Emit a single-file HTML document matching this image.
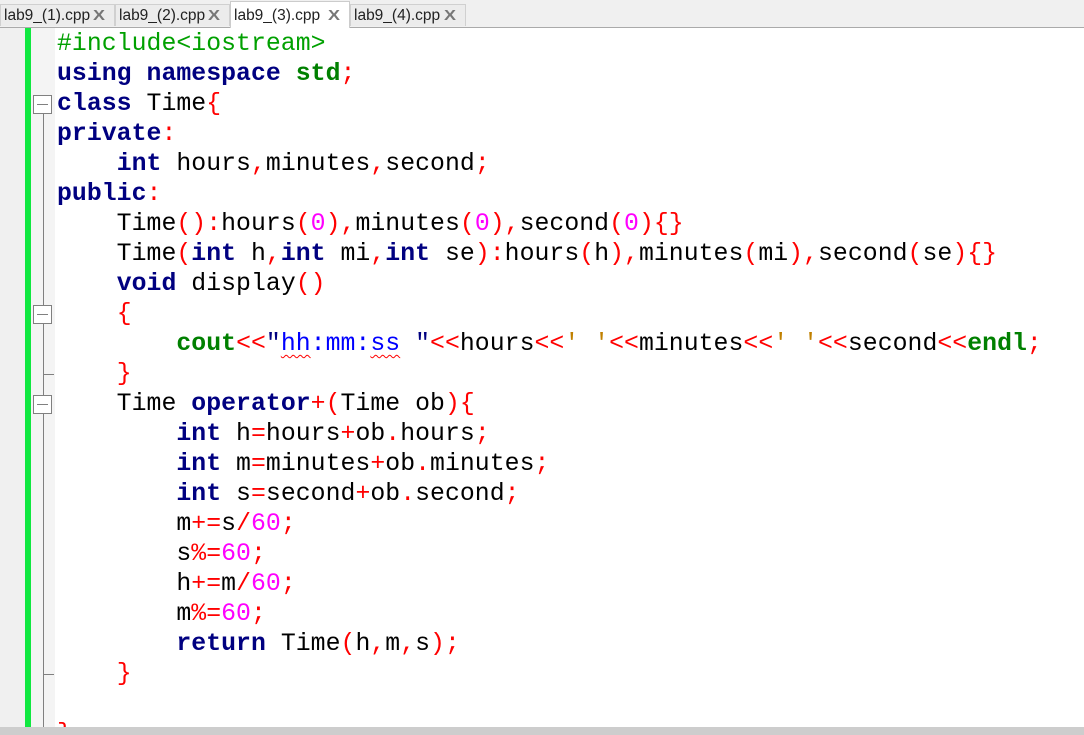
<!DOCTYPE html>
<html><head><meta charset="utf-8"><style>
html,body{margin:0;padding:0;width:1084px;height:735px;overflow:hidden;background:#fff;position:relative}
.tabs{position:absolute;left:0;top:0;width:1084px;height:27px;background:#f0f0f0;border-bottom:1px solid #aaa}
.tab{position:absolute;top:4px;height:22px;background:#ececec;border:1px solid #d0d0d0;border-bottom:none;font:15.5px "Liberation Sans",sans-serif;color:#222;line-height:22px;padding-left:3px;box-sizing:border-box}
.tab.act{top:1px;height:27px;background:#fff;line-height:28px;border-color:#ccc}
.tab b{position:absolute;right:10px;color:#777;font-weight:bold;font-size:15px;transform:scaleX(1.2)}
.lm{position:absolute;left:0;top:28px;width:25px;height:699px;background:#f0f0f0}
.gb{position:absolute;left:25px;top:28px;width:6px;height:699px;background:#10e840}
.fm{position:absolute;left:31px;top:28px;width:24px;height:699px;background:#f4f4f4}
.vl{position:absolute;left:43px;width:1px;background:#808080}
.box{position:absolute;left:33px;width:19px;height:19px;border:1px solid #808080;background:#fff;box-sizing:border-box}
.box:after{content:"";position:absolute;left:3px;right:3px;top:8px;height:1px;background:#808080}
.tk{position:absolute;left:43px;width:11px;height:1px;background:#808080}
.code{position:absolute;left:57px;top:29px;font:24.8px/30px "Liberation Mono",monospace;letter-spacing:0.04px;white-space:pre;color:#000}
.k{color:#000080;font-weight:bold}
.g{color:#008000;font-weight:bold}
.o{color:#ff0000}
.n{color:#ff00ff}
.s{color:#0000ff}
.c{color:#c08000}
.p{color:#00a000}
.u{text-decoration:underline wavy #f00;text-decoration-thickness:1px;text-underline-offset:4px}
.bot{position:absolute;left:0;top:727px;width:1084px;height:8px;background:#cdcdcd}
</style></head><body>
<div class="tabs">
<div class="tab" style="left:0;width:115px">lab9_(1).cpp<b>X</b></div>
<div class="tab" style="left:115px;width:115px">lab9_(2).cpp<b>X</b></div>
<div class="tab act" style="left:230px;width:120px">lab9_(3).cpp<b>X</b></div>
<div class="tab" style="left:350px;width:116px">lab9_(4).cpp<b>X</b></div>
</div>
<div class="lm"></div><div class="gb"></div><div class="fm"></div>
<div class="vl" style="top:113px;height:614px"></div>
<div class="box" style="top:95px"></div>
<div class="box" style="top:305px"></div>
<div class="tk" style="top:374px"></div>
<div class="box" style="top:395px"></div>
<div class="tk" style="top:674px"></div>
<div class="code"><span class="p">#include&lt;iostream&gt;</span>
<span class="k">using namespace</span> <span class="g">std</span><span class="o">;</span>
<span class="k">class</span> Time<span class="o">{</span>
<span class="k">private</span><span class="o">:</span>
    <span class="k">int</span> hours<span class="o">,</span>minutes<span class="o">,</span>second<span class="o">;</span>
<span class="k">public</span><span class="o">:</span>
    Time<span class="o">():</span>hours<span class="o">(</span><span class="n">0</span><span class="o">),</span>minutes<span class="o">(</span><span class="n">0</span><span class="o">),</span>second<span class="o">(</span><span class="n">0</span><span class="o">){}</span>
    Time<span class="o">(</span><span class="k">int</span> h<span class="o">,</span><span class="k">int</span> mi<span class="o">,</span><span class="k">int</span> se<span class="o">):</span>hours<span class="o">(</span>h<span class="o">),</span>minutes<span class="o">(</span>mi<span class="o">),</span>second<span class="o">(</span>se<span class="o">){}</span>
    <span class="k">void</span> display<span class="o">()</span>
    <span class="o">{</span>
        <span class="g">cout</span><span class="o">&lt;&lt;</span><span style="color:#000080">"</span><span class="s"><span class="u">hh</span>:mm:<span class="u">ss</span> </span><span style="color:#000080">"</span><span class="o">&lt;&lt;</span>hours<span class="o">&lt;&lt;</span><span class="c">' '</span><span class="o">&lt;&lt;</span>minutes<span class="o">&lt;&lt;</span><span class="c">' '</span><span class="o">&lt;&lt;</span>second<span class="o">&lt;&lt;</span><span class="g">endl</span><span class="o">;</span>
    <span class="o">}</span>
    Time <span class="k">operator</span><span class="o">+(</span>Time ob<span class="o">){</span>
        <span class="k">int</span> h<span class="o">=</span>hours<span class="o">+</span>ob<span class="o">.</span>hours<span class="o">;</span>
        <span class="k">int</span> m<span class="o">=</span>minutes<span class="o">+</span>ob<span class="o">.</span>minutes<span class="o">;</span>
        <span class="k">int</span> s<span class="o">=</span>second<span class="o">+</span>ob<span class="o">.</span>second<span class="o">;</span>
        m<span class="o">+=</span>s<span class="o">/</span><span class="n">60</span><span class="o">;</span>
        s<span class="o">%=</span><span class="n">60</span><span class="o">;</span>
        h<span class="o">+=</span>m<span class="o">/</span><span class="n">60</span><span class="o">;</span>
        m<span class="o">%=</span><span class="n">60</span><span class="o">;</span>
        <span class="k">return</span> Time<span class="o">(</span>h<span class="o">,</span>m<span class="o">,</span>s<span class="o">);</span>
    <span class="o">}</span>

<span class="o">}</span></div>
<div class="bot"></div>
</body></html>
